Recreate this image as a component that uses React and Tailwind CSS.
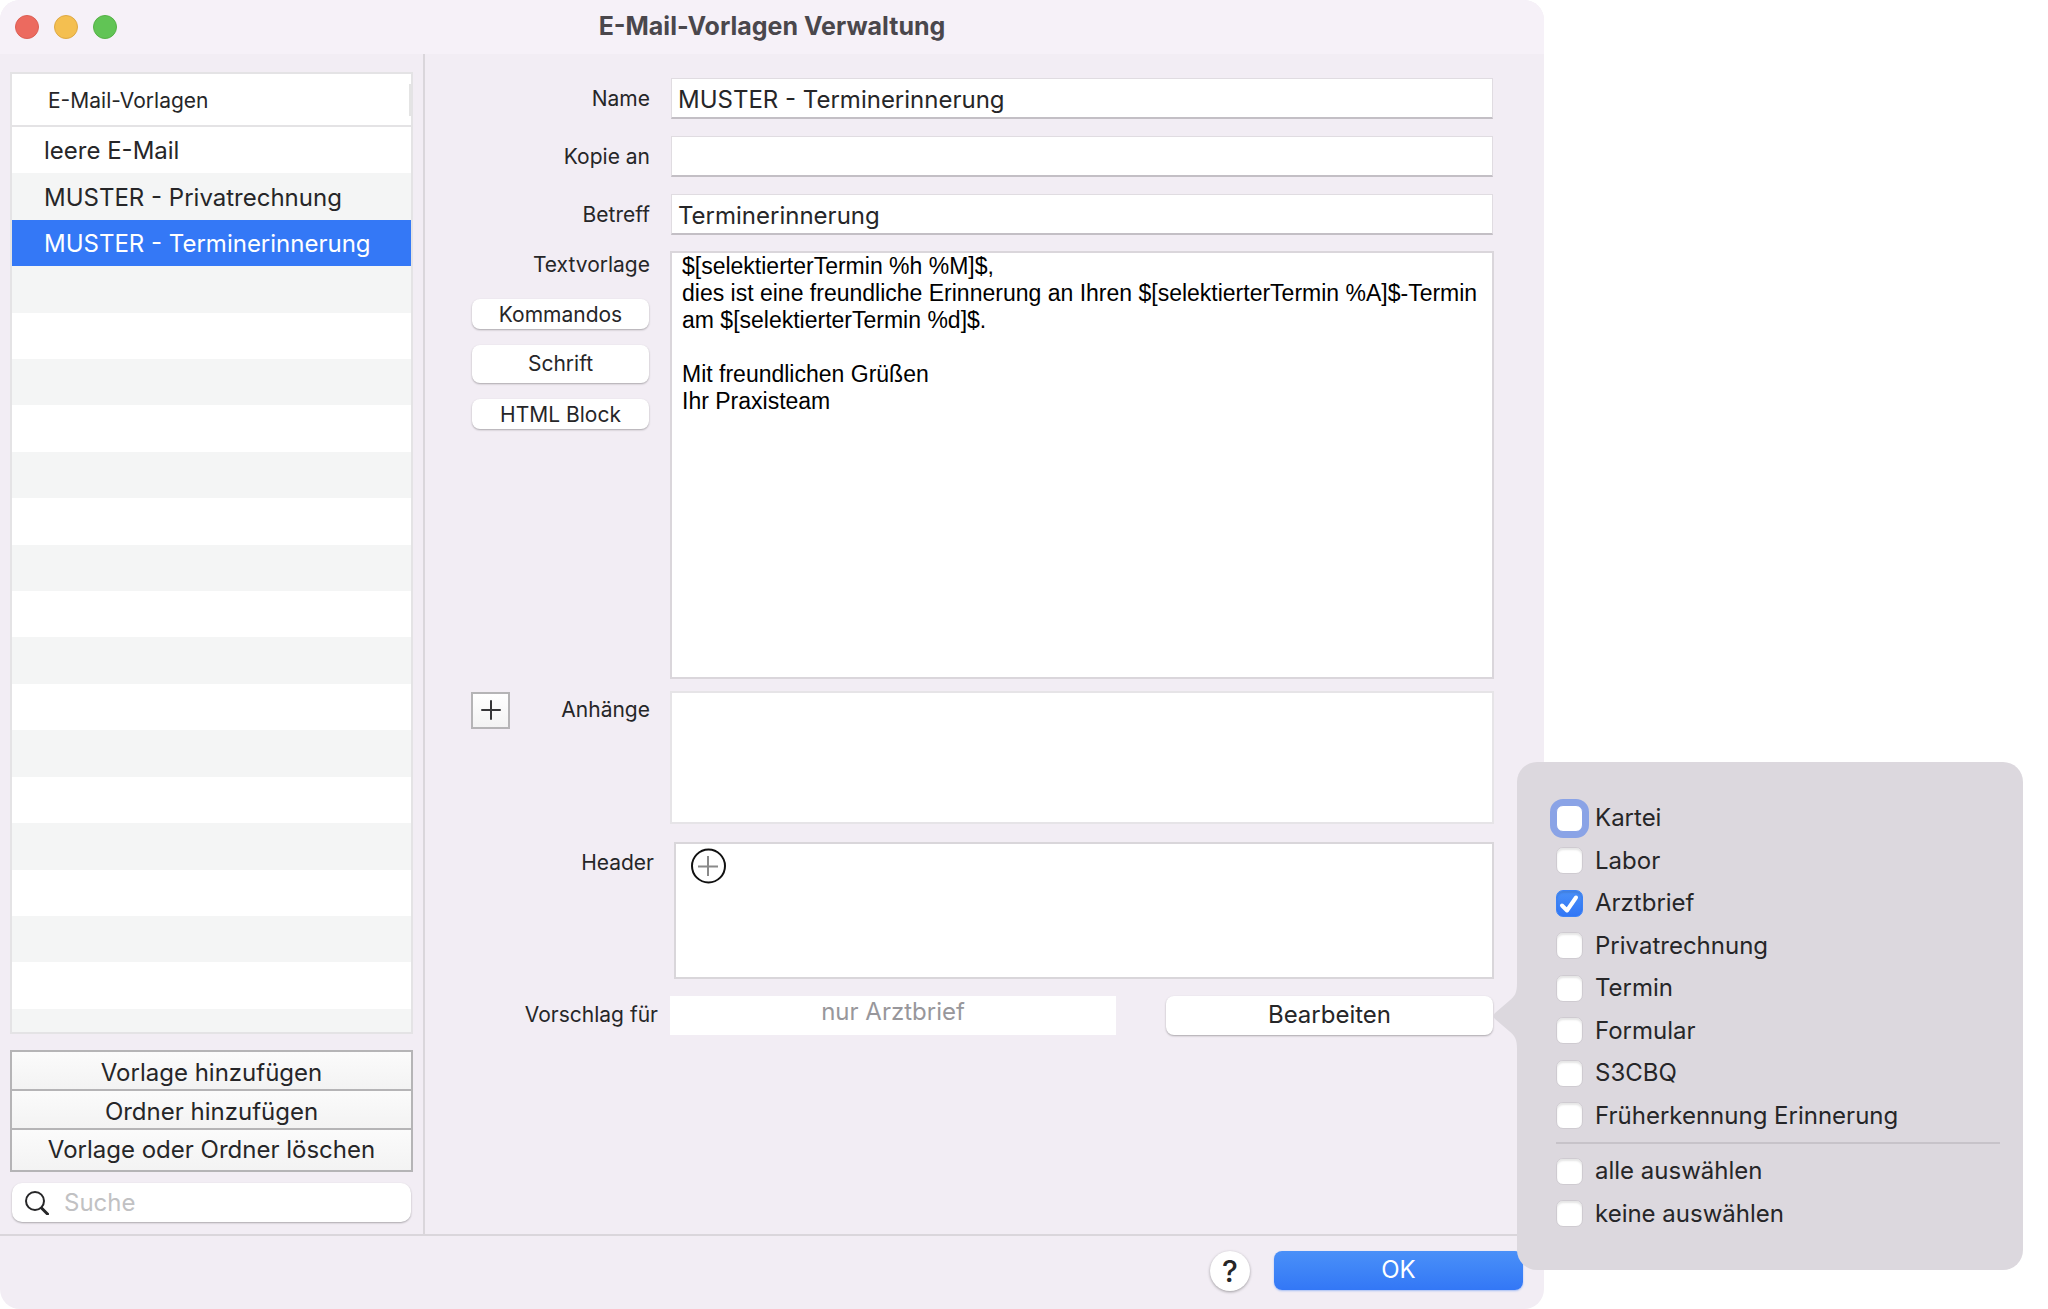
import React, { useState } from 'react';

const templates = ['leere E-Mail', 'MUSTER - Privatrechnung', 'MUSTER - Terminerinnerung'];
const emptyRows = Array.from({ length: 17 }, (_, i) => i);

const categories = [
  'Kartei',
  'Labor',
  'Arztbrief',
  'Privatrechnung',
  'Termin',
  'Formular',
  'S3CBQ',
  'Früherkennung Erinnerung',
];

const bodyText = `$[selektierterTermin %h %M]$,
dies ist eine freundliche Erinnerung an Ihren $[selektierterTermin %A]$-Termin am $[selektierterTermin %d]$.

Mit freundlichen Grüßen
Ihr Praxisteam`;

const labelStyle = 'shrink-0 text-right text-[21px]';
const pushButton = 'rounded-lg bg-white shadow-[0_1px_2px_rgba(0,0,0,0.3)]';

function Field({ id, label, value }) {
  return (
    <div className="flex items-center gap-[21px]">
      <label htmlFor={id} className={`w-[225px] ${labelStyle}`}>{label}</label>
      <input
        id={id}
        type="text"
        defaultValue={value}
        className="mr-px h-[41px] min-w-0 flex-1 border border-b-2 border-[#e0dce1] border-b-[#c3bfc5] bg-white px-[6px] pt-[2px] text-2xl outline-none"
      />
    </div>
  );
}

function Check({ label, checked, focused, onChange }) {
  return (
    <li className="flex items-center">
      <label className="flex items-center gap-3">
        <span className="relative flex">
          <input
            type="checkbox"
            checked={checked}
            onChange={onChange}
            className={`size-[27px] appearance-none rounded-[7px] border outline-none checked:border-[#3b82f7] checked:bg-linear-to-b checked:from-[#4a90f8] checked:to-[#3176f6] ${
              focused
                ? 'border-[#8aa3e6] bg-white ring-6 ring-[#8aa3e6]'
                : 'border-[#cfcbd1] bg-white shadow-[inset_0_2px_2px_rgba(0,0,0,0.1)]'
            }`}
          />
          {checked && (
            <svg viewBox="0 0 27 27" className="pointer-events-none absolute inset-0 size-[27px]" fill="none" stroke="white" strokeWidth="4" strokeLinecap="round" strokeLinejoin="round">
              <path d="M6 15.5 L11 20.5 L20 7.5" />
            </svg>
          )}
        </span>
        {label}
      </label>
    </li>
  );
}

function Popover() {
  const [selected, setSelected] = useState(['Arztbrief']);

  const toggle = (name) =>
    setSelected(selected.includes(name) ? selected.filter((n) => n !== name) : [...selected, name]);

  return (
    <div className="absolute -top-[234px] left-full z-10 ml-6 w-[506px] rounded-[20px] bg-[#dcd8de] pt-[35px] pr-[23px] pb-[35px] pl-[39px] text-2xl">
      <svg viewBox="0 0 24 66" className="absolute top-[221px] right-full h-[66px] w-6" fill="#dcd8de">
        <path d="M24 0 C24 10 22 13 16 18 L2 30 Q-1 33 2 36 L16 48 C22 53 24 56 24 66 Z" />
      </svg>
      <ul className="grid h-[340px] auto-rows-fr">
        {categories.map((name, i) => (
          <Check
            key={name}
            label={name}
            focused={i === 0}
            checked={selected.includes(name)}
            onChange={() => toggle(name)}
          />
        ))}
      </ul>
      <hr className="mt-[5px] mb-[6px] border-t-2 border-[#c7c3c9]" />
      <ul className="grid h-[85px] auto-rows-fr">
        <Check label="alle auswählen" checked={false} onChange={() => setSelected(categories)} />
        <Check label="keine auswählen" checked={false} onChange={() => setSelected([])} />
      </ul>
    </div>
  );
}

function Sidebar() {
  const [active, setActive] = useState(2);

  return (
    <aside className="flex w-[425px] shrink-0 flex-col border-r-2 border-[#dad6db] px-[10px] pt-[18px] pb-3">
      <div className="flex flex-1 flex-col border-2 border-[#e4e3e5] bg-white">
        <div className="flex h-[53px] items-center justify-between border-b-2 border-[#e4e3e5] pl-9">
          <h2 className="pt-[2px] text-[21px]">E-Mail-Vorlagen</h2>
          <span className="h-8 w-[2px] bg-[#e4e4e4]"></span>
        </div>
        <ul className="flex flex-1 flex-col text-2xl">
          {templates.map((name, i) => (
            <li key={name} className="flex flex-2 even:bg-[#f4f5f5]">
              <button
                onClick={() => setActive(i)}
                className={`w-full pt-[2px] pl-8 text-left ${active === i ? 'bg-[#3478f6] text-white' : ''}`}
              >
                {name}
              </button>
            </li>
          ))}
          {emptyRows.map((n) => (
            <li key={n} className="flex-2 even:bg-[#f4f5f5] last:flex-1"></li>
          ))}
        </ul>
      </div>

      <div className="mt-4 flex flex-col divide-y-2 divide-[#b5b4b6] border-2 border-[#b5b4b6] text-2xl">
        <button className="h-[39px] bg-linear-to-b from-[#fbfbfb] to-[#f3f3f3] pt-1">Vorlage hinzufügen</button>
        <button className="h-[39px] bg-linear-to-b from-[#fbfbfb] to-[#f3f3f3] pt-1">Ordner hinzufügen</button>
        <button className="h-10 bg-linear-to-b from-[#fbfbfb] to-[#f3f3f3]">Vorlage oder Ordner löschen</button>
      </div>

      <label className="mx-[2px] mt-[11px] flex h-[39px] items-center gap-[15px] rounded-[10px] bg-white pl-[13px] shadow-[0_1px_2px_rgba(0,0,0,0.3)]">
        <svg viewBox="0 0 24 24" className="size-6 shrink-0" fill="none" stroke="#262628" strokeLinecap="round">
          <circle cx="10" cy="10" r="9" strokeWidth="2" />
          <path d="M16.5 17 L22.5 23" strokeWidth="3" />
        </svg>
        <input type="search" placeholder="Suche" aria-label="Suche" className="min-w-0 flex-1 bg-transparent text-2xl outline-none placeholder:text-[#c1c1c3]" />
      </label>
    </aside>
  );
}

export default function App() {
  return (
    <div className="flex min-h-screen overflow-hidden bg-white pr-[504px] font-['Inter','Liberation_Sans',sans-serif] text-[#262628]">
      <div className="flex flex-1 flex-col rounded-[20px] bg-[#f2edf4]">
        <header className="relative flex h-[54px] items-center justify-center rounded-t-[20px] bg-[#f6f1f8]">
          <div className="absolute left-[15px] flex gap-[15px]">
            <button aria-label="Schließen" className="size-6 rounded-full border border-[#dc5f55] bg-[#ec6a5f]"></button>
            <button aria-label="Minimieren" className="size-6 rounded-full border border-[#dea945] bg-[#f4bf50]"></button>
            <button aria-label="Maximieren" className="size-6 rounded-full border border-[#55b146] bg-[#61c455]"></button>
          </div>
          <h1 className="text-[25px] font-bold text-[#4a474c]">E-Mail-Vorlagen Verwaltung</h1>
        </header>

        <div className="flex flex-1">
          <Sidebar />

          <main className="min-w-0 flex-1 pt-6 pr-[50px]">
            <div className="flex flex-col gap-[17px]">
              <Field id="name" label="Name" value="MUSTER - Terminerinnerung" />
              <Field id="kopie" label="Kopie an" value="" />
              <Field id="betreff" label="Betreff" value="Terminerinnerung" />
            </div>

            <div className="mt-4 flex gap-5">
              <div className="flex w-[225px] shrink-0 flex-col items-end text-[21px]">
                <label htmlFor="text" className="leading-7">Textvorlage</label>
                <div className="mt-5 mr-px flex w-[177px] flex-col gap-4">
                  <button className={`h-[30px] ${pushButton}`}>Kommandos</button>
                  <button className={`h-[38px] ${pushButton}`}>Schrift</button>
                  <button className={`h-[30px] ${pushButton}`}>HTML Block</button>
                </div>
              </div>
              <textarea
                id="text"
                defaultValue={bodyText}
                className="h-[428px] min-w-0 flex-1 resize-none border-2 border-[#dad6db] bg-white px-[10px] font-['Liberation_Sans',sans-serif] text-[23px] leading-[27px] text-black outline-none"
              />
            </div>

            <div className="mt-3 flex gap-5">
              <div className="flex h-[38px] w-[225px] shrink-0 items-center justify-between pl-[46px]">
                <button aria-label="Anhang hinzufügen" className="flex h-[37px] w-[39px] items-center justify-center border-2 border-[#b5b4b6] bg-linear-to-b from-white to-[#f3f3f3]">
                  <svg viewBox="0 0 20 20" className="size-5" stroke="#363638" strokeWidth="2" strokeLinecap="round">
                    <path d="M10 1 V19 M1 10 H19" />
                  </svg>
                </button>
                <span className={labelStyle}>Anhänge</span>
              </div>
              <div className="h-[133px] flex-1 border-2 border-[#e6e4e7] bg-white"></div>
            </div>

            <div className="mt-[18px] flex gap-5">
              <span className={`w-[229px] leading-[42px] ${labelStyle}`}>Header</span>
              <div className="h-[137px] flex-1 border-2 border-[#d9d6da] bg-white px-[15px] py-1">
                <button aria-label="Header hinzufügen">
                  <svg viewBox="0 0 36 36" className="size-9" fill="none" strokeWidth="2">
                    <circle cx="17.5" cy="18" r="16.5" stroke="#111" />
                    <path d="M17 8 V28 M7 18.5 H27" stroke="#8a8a8a" />
                  </svg>
                </button>
              </div>
            </div>

            <div className="mt-[17px] flex items-center">
              <span className={`mr-3 w-[233px] pb-[2px] ${labelStyle}`}>Vorschlag für</span>
              <div className="flex h-[39px] flex-1 justify-center bg-white text-2xl text-[#98979b]">nur Arztbrief</div>
              <div className="relative mr-px ml-[50px]">
                <button className={`h-[39px] w-[327px] pb-[2px] text-2xl ${pushButton}`}>Bearbeiten</button>
                <Popover />
              </div>
            </div>
          </main>
        </div>

        <footer className="flex h-[75px] items-center justify-end gap-6 border-t-2 border-[#dad6db] pr-[21px] pb-1">
          <button aria-label="Hilfe" className="size-10 rounded-full bg-white text-[30px] leading-10 font-medium shadow-[0_1px_3px_rgba(0,0,0,0.35)]">?</button>
          <button className="h-[39px] w-[249px] rounded-lg bg-linear-to-b from-[#4a90f8] to-[#3377f6] pb-[2px] text-2xl text-white shadow-[0_1px_2px_rgba(51,119,246,0.4)]">OK</button>
        </footer>
      </div>
    </div>
  );
}
